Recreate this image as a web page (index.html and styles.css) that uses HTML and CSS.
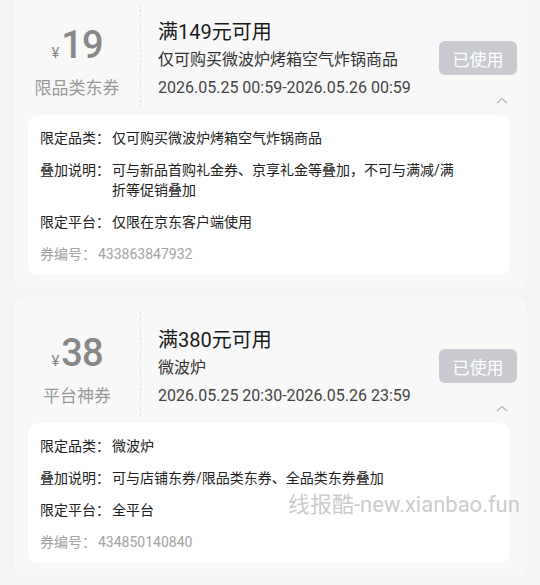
FILE: index.html
```html
<!DOCTYPE html>
<html lang="zh-CN">
<head>
    <meta charset="UTF-8">
    <meta name="viewport" content="width=device-width, initial-scale=1.0">
    <title>我的优惠券</title>
    <link rel="stylesheet" href="styles.css">
</head>
<body>
    <div class="page">
        <div class="coupon">
            <div class="head">
                <div class="amount">
                    <div class="price"><span class="yen">¥</span>19</div>
                    <div class="kind">限品类东券</div>
                </div>
                <div class="info">
                    <div class="title">满149元可用</div>
                    <div class="scope">仅可购买微波炉烤箱空气炸锅商品</div>
                    <div class="date">2026.05.25 00:59-2026.05.26 00:59</div>
                </div>
                <div class="side">
                    <button class="used" disabled>已使用</button>
                    <svg class="fold" width="12" height="7" viewBox="0 0 12 7"><path d="M1 6 L6 1.5 L11 6" fill="none" stroke="#b8b8b8" stroke-width="1.3"/></svg>
                </div>
            </div>
            <div class="detail">
                <div class="row"><span class="label">限定品类：</span><span class="value">仅可购买微波炉烤箱空气炸锅商品</span></div>
                <div class="row"><span class="label">叠加说明：</span><span class="value">可与新品首购礼金券、京享礼金等叠加，不可与满减/满折等促销叠加</span></div>
                <div class="row"><span class="label">限定平台：</span><span class="value">仅限在京东客户端使用</span></div>
                <div class="row code">券编号：<span class="num">433863847932</span></div>
            </div>
        </div>

        <div class="coupon">
            <div class="head">
                <div class="amount">
                    <div class="price"><span class="yen">¥</span>38</div>
                    <div class="kind">平台神券</div>
                </div>
                <div class="info">
                    <div class="title">满380元可用</div>
                    <div class="scope">微波炉</div>
                    <div class="date">2026.05.25 20:30-2026.05.26 23:59</div>
                </div>
                <div class="side">
                    <button class="used" disabled>已使用</button>
                    <svg class="fold" width="12" height="7" viewBox="0 0 12 7"><path d="M1 6 L6 1.5 L11 6" fill="none" stroke="#b8b8b8" stroke-width="1.3"/></svg>
                </div>
            </div>
            <div class="detail">
                <div class="row"><span class="label">限定品类：</span><span class="value">微波炉</span></div>
                <div class="row"><span class="label">叠加说明：</span><span class="value">可与店铺东券/限品类东券、全品类东券叠加</span></div>
                <div class="row"><span class="label">限定平台：</span><span class="value">全平台</span></div>
                <div class="row code">券编号：<span class="num">434850140840</span></div>
            </div>
        </div>

        <div class="watermark">线报酷-new.xianbao.fun</div>
    </div>
</body>
</html>
```

FILE: styles.css
```css
body {
    margin: 0;
    background: #f4f4f4;
    font-family: Roboto, "Noto Sans CJK SC", sans-serif;
    color: #222;
    overflow: hidden;
}
.page {
    position: relative;
    margin-top: -11px;
}
.coupon {
    background: #f8f8f8;
    margin: 0 13px 8px 14px;
    padding: 15px 17px 14px 14px;
    border-radius: 10px;
}
.head {
    display: flex;
    height: 104px;
    margin: 0 -7px 7px -14px;
}
.amount {
    width: 126px;
    border-right: 1px dashed #e2e2e2;
    display: flex;
    flex-direction: column;
    align-items: center;
    padding-top: 20px;
    color: #888;
}
.price {
    font-size: 38px;
    font-weight: 500;
    line-height: 42px;
    letter-spacing: -1px;
}
.yen {
    font-size: 15px;
    font-weight: 400;
    margin-right: 3px;
}
.kind {
    font-size: 17px;
    line-height: 22px;
    color: #999;
    margin-top: 3px;
}
.info {
    flex: 1;
    padding: 14px 0 0 17px;
}
.info div {
    line-height: 28px;
}
.title {
    font-size: 20px;
    color: #1a1a1a;
}
.scope {
    font-size: 16px;
    color: #333;
}
.date {
    font-size: 16px;
    color: #444;
}
.side {
    display: flex;
    flex-direction: column;
    align-items: flex-end;
    padding-top: 37px;
}
.used {
    width: 78px;
    height: 34px;
    border: none;
    border-radius: 6px;
    background: #c9cbd1;
    color: #fff;
    font-family: inherit;
    font-size: 17px;
    padding: 0;
}
.fold {
    margin: 22px 9px 0 0;
}
.detail {
    background: #fff;
    border-radius: 10px;
    padding: 13px 40px 11px 12px;
    display: flex;
    flex-direction: column;
    gap: 12px;
    font-size: 14px;
    line-height: 20px;
}
.row {
    display: flex;
}
.label {
    width: 72px;
    flex-shrink: 0;
}
.value {
    max-width: 345px;
}
.code {
    color: #a3a3a3;
    display: block;
}
.num {
    margin-left: 2px;
}
.watermark {
    position: absolute;
    left: 288px;
    top: 497px;
    font-size: 22px;
    color: rgba(160, 160, 160, 0.55);
    white-space: nowrap;
}
```
